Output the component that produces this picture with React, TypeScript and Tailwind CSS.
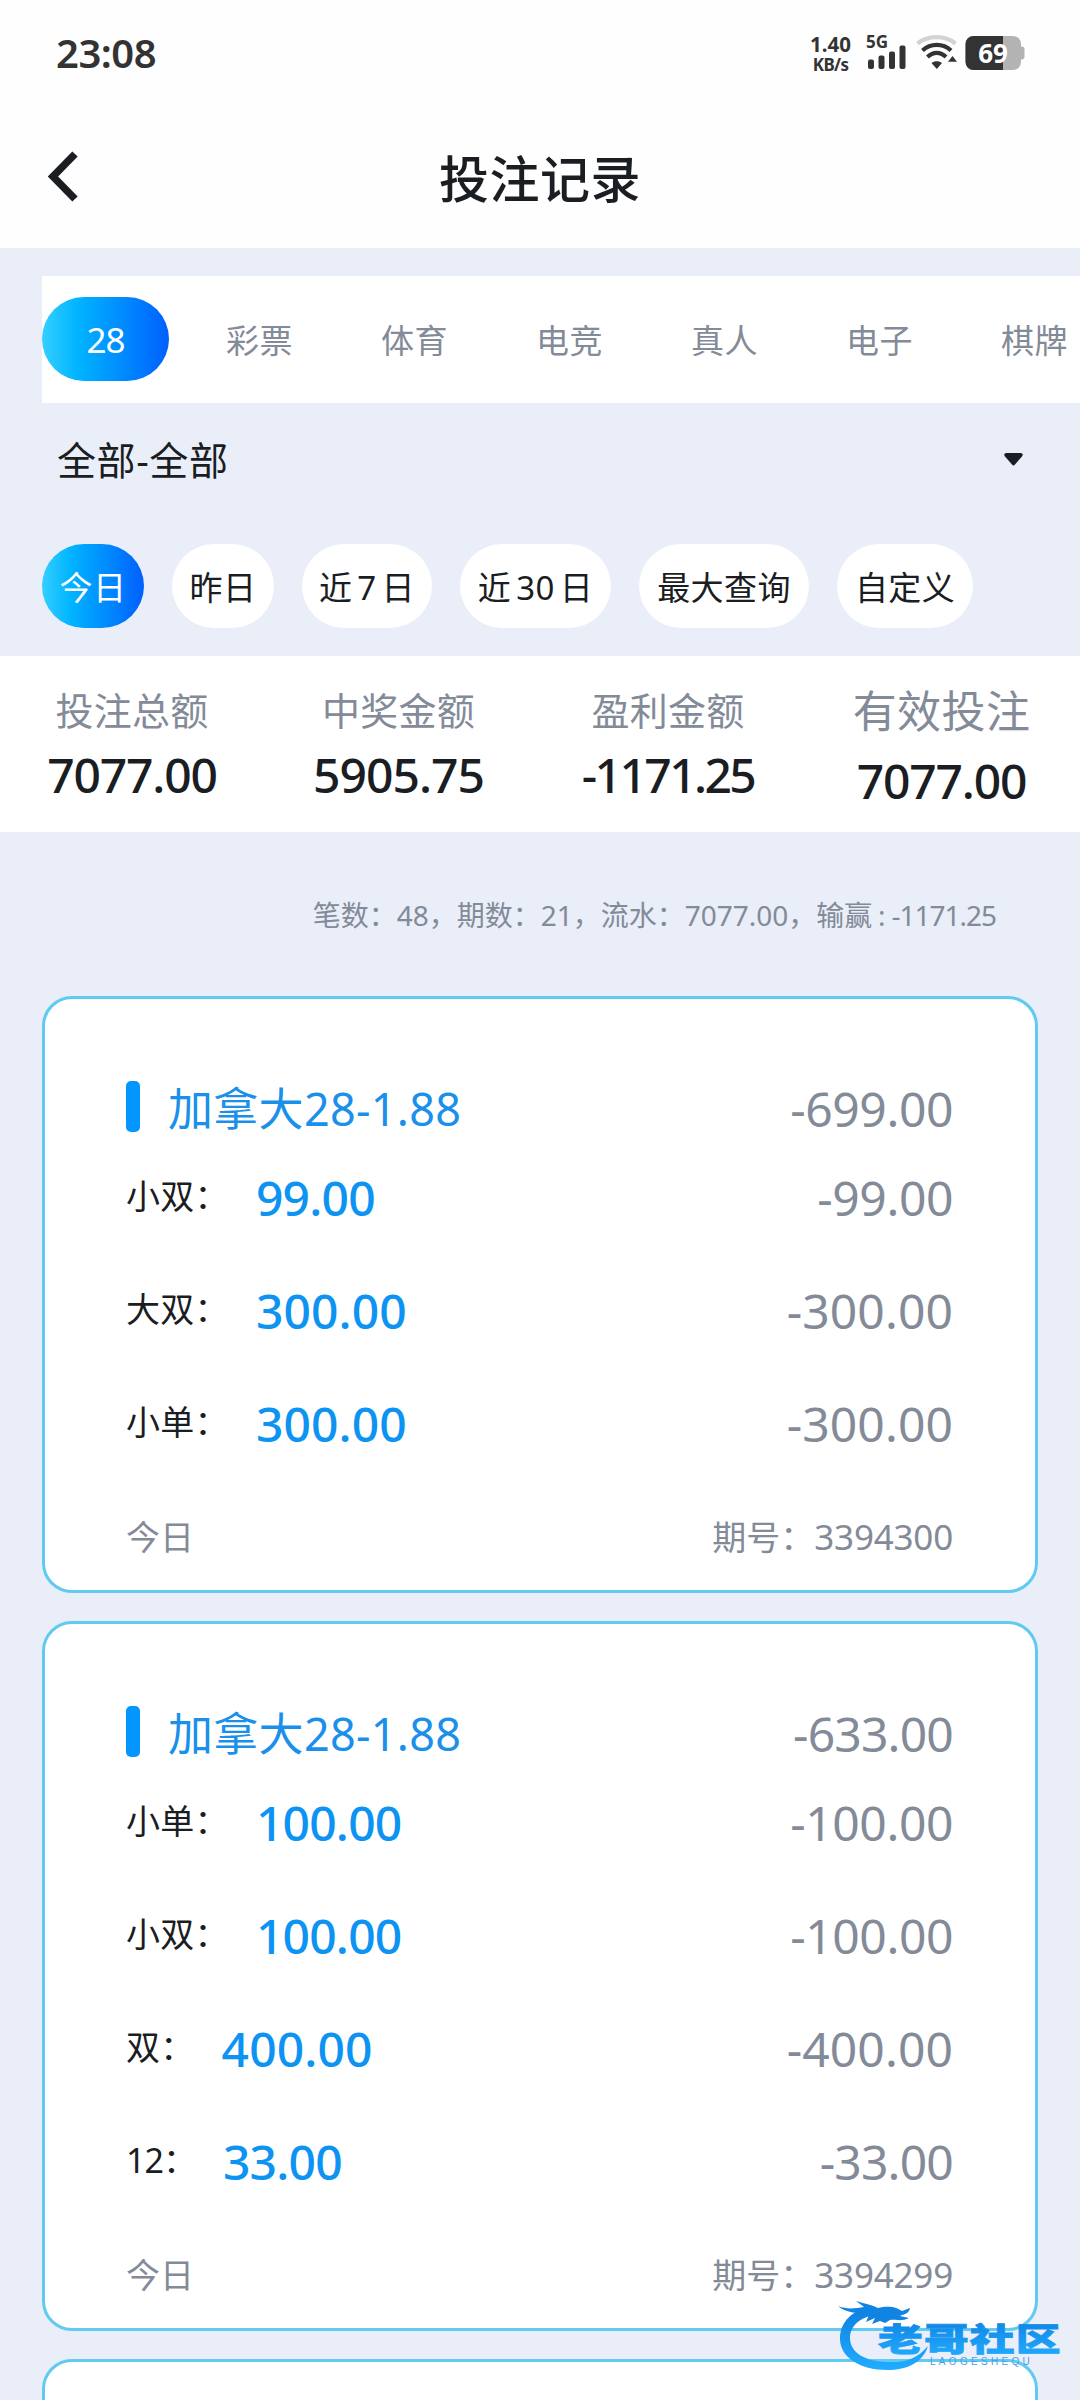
import React from "react";

type Bet = { label: string; stake: string; result: string; tight?: boolean };
type BetRecord = { total: string; issue: string; bets: Bet[] };

const tabs = ["彩票", "体育", "电竞", "真人", "电子", "棋牌"];

const ranges = [
  { label: "今日", width: "w-[102px]", active: true },
  { label: "昨日", width: "w-[102px]" },
  { label: "近 7 日", width: "w-[130px]" },
  { label: "近 30 日", width: "w-[151px]" },
  { label: "最大查询", width: "w-[170px]" },
  { label: "自定义", width: "w-[136px]" },
];

const records: BetRecord[] = [
  {
    total: "-699.00",
    issue: "3394300",
    bets: [
      { label: "小双：", stake: "99.00", result: "-99.00" },
      { label: "大双：", stake: "300.00", result: "-300.00" },
      { label: "小单：", stake: "300.00", result: "-300.00" },
    ],
  },
  {
    total: "-633.00",
    issue: "3394299",
    bets: [
      { label: "小单：", stake: "100.00", result: "-100.00" },
      { label: "小双：", stake: "100.00", result: "-100.00" },
      { label: "双：", stake: "400.00", result: "-400.00" },
      { label: "12：", stake: "33.00", result: "-33.00", tight: true },
    ],
  },
];

function amountTracking(text: string) {
  if (text === "99.00") return "tracking-[-0.8px]";
  if (/^100|33\./.test(text)) return "tracking-[-0.8px]";
  if (/^-(100|99|633|699)/.test(text)) return "tracking-[-0.4px]";
  return "tracking-[0.1px]";
}

function StatusBar() {
  return (
    <div className="flex h-[106px] items-start justify-between pr-[56px] pl-[56px] text-[#333333]">
      <div className="mt-[33px] text-[40px] leading-[40px] font-semibold tracking-[-0.5px]">23:08</div>
      <div className="mt-[33px] flex h-[40px] items-start">
        <div className="mr-[15px] flex flex-col items-center font-bold">
          <span className="mt-[1px] text-[20.500px] leading-[20px]">1.40</span>
          <span className="mt-[1px] text-[17px] leading-[20px] tracking-[-0.700px]">KB/s</span>
        </div>
        <svg width="42" height="40" viewBox="0 0 42 40" className="mr-[8px] overflow-visible" fill="#333333">
          <text x="0" y="14.500" fontSize="17" fontWeight="700" fontFamily="Noto Sans">5G</text>
          <rect x="2" y="26.500" width="6" height="9.500" rx="2" />
          <rect x="12.500" y="22.500" width="6" height="13.500" rx="2" />
          <rect x="23" y="18.500" width="6" height="17.500" rx="2" />
          <rect x="33.500" y="12.500" width="6" height="23.500" rx="2" />
        </svg>
        <svg width="42" height="40" viewBox="0 0 42 40" className="mr-[7px]" fill="none" strokeWidth="4.200">
          <path d="M1.500 10.500C12 2 29 2 39.500 10.500" stroke="#d2d2d2" />
          <path d="M6.500 17.500C14.500 10 27 10 35 17.500" stroke="#333333" />
          <path d="M11.500 24C17 18.500 24.500 18.500 30 24" stroke="#333333" />
          <path d="M15.500 30C18.500 27.600 23 27.600 26 30L20.800 36Z" fill="#333333" />
          <path d="M32 28.800L36.500 23L41 28.800Z" fill="#333333" />
        </svg>
        <svg width="59" height="40" viewBox="0 0 59 40" className="overflow-visible">
          <path d="M54 13.500h2.500q3 0 3 3v7q0 3-3 3h-2.500z" fill="#b3b3b3" />
          <rect x="0.500" y="3" width="55.500" height="34" rx="8" fill="#b3b3b3" />
          <path d="M8.500 3H38V37H8.500a8 8 0 0 1-8-8V11a8 8 0 0 1 8-8z" fill="#333333" />
          <text x="28" y="29.500" textAnchor="middle" fontSize="26" fontWeight="700" fontFamily="Noto Sans" fill="#ffffff">69</text>
        </svg>
      </div>
    </div>
  );
}

function TitleBar() {
  return (
    <div className="relative flex h-[142px] items-center justify-center pt-[4px] text-[#1a1d21]">
      <svg className="absolute top-[43px] left-[44px]" width="38" height="56" viewBox="0 0 38 56" fill="none">
        <path d="M31 5L9 27.500L31 50" stroke="#1a1d21" strokeWidth="7.500" />
      </svg>
      <h1 className="text-[50px] leading-[60px] font-medium tracking-[0.5px]">投注记录</h1>
    </div>
  );
}

function Stat({ label, value, width, tracking }: { label: string; value: string; width: string; tracking: string }) {
  return (
    <div className={"flex flex-col items-center pt-[29px] " + width}>
      <span className="text-[38px] leading-[50px] tracking-[0.3px] text-[#838a98]">{label}</span>
      <span className={"mt-[15px] text-[48px] leading-[50px] font-medium text-[#1a1d21] " + tracking}>{value}</span>
    </div>
  );
}

function Card({ record }: { record: BetRecord }) {
  return (
    <section className="mb-[28px] rounded-[30px] border-[3px] border-[#60caf1] bg-white pt-[77px] pr-[82px] pl-[81px]">
      <div className="flex h-[65px] items-center justify-between">
        <div className="flex items-center">
          <span className="mt-[-4px] h-[51px] w-[14px] rounded-[5px] bg-[#0396ff]" />
          <span className="ml-[28px] text-[45px] leading-[60px] tracking-[0.3px] text-[#1a90ea]">加拿大28-1.88</span>
        </div>
        <span className={"text-[48px] leading-[60px] text-[#838a98] " + amountTracking(record.total)}>{record.total}</span>
      </div>
      {record.bets.map((b) => (
        <div key={b.label} className="flex h-[113px] items-center justify-between">
          <div className="flex items-center">
            <span
              className={
                "mt-[-4px] text-[34px] leading-[50px] text-[#1a1d21] " + (b.tight ? "tracking-[-1px]" : "tracking-[0.3px]")
              }
            >
              {b.label}
            </span>
            <span className={"ml-[27px] text-[48px] leading-[60px] font-medium text-[#0d93f2] " + amountTracking(b.stake)}>
              {b.stake}
            </span>
          </div>
          <span className={"text-[48px] leading-[60px] text-[#838a98] " + amountTracking(b.result)}>{b.result}</span>
        </div>
      ))}
      <div className="flex h-[110px] items-center justify-between pt-[5px] text-[34px] text-[#838a98]">
        <span>今日</span>
        <span>
          期号：<span className="text-[35px] tracking-[-0.2px]">{record.issue}</span>
        </span>
      </div>
    </section>
  );
}

function Watermark() {
  return (
    <svg className="absolute top-[2296px] left-[832px]" width="240" height="84" viewBox="0 0 240 84">
      <defs>
        <linearGradient id="mark" x1="0" y1="0" x2="0" y2="1">
          <stop offset="0" stopColor="#0d7fe0" />
          <stop offset="1" stopColor="#22adff" />
        </linearGradient>
      </defs>
      <path
        d="M42 11C20 13 8 26 8 43C8 61 28 74 55 74C76 74 91 66 96 50C86 62 73 67 57 66C34 66 18 57 18 42C18 30 28 21 44 19Z"
        fill="url(#mark)"
      />
      <path
        d="M6 10C16 14 24 12 32 11L24 5C34 8 40 9 46 12C58 9 66 12 70 15L78 12C77 18 72 18 68 20L77 22C70 26 62 23 58 24L53 27L48 25L40 28L43 22L34 26L37 19C27 16 14 18 6 10Z"
        fill="#1183e2"
      />
      <g fontFamily="'Noto Sans CJK SC', sans-serif" fontWeight="900" fill="url(#mark)" stroke="url(#mark)" strokeWidth="0.800">
        <text transform="translate(46 54.500) scale(1.4 1)" fontSize="32" letterSpacing="0.800">老哥社区</text>
      </g>
      <text x="98" y="68.500" fontSize="10" letterSpacing="3.300" fontWeight="400" fontFamily="Liberation Sans" fill="#4a9fe4">
        LAOGESHEQU
      </text>
    </svg>
  );
}

export default function App() {
  return (
    <div className="relative h-[2400px] w-[1080px] overflow-hidden bg-[#eaeef9] font-['Noto_Sans','Noto_Sans_CJK_SC',sans-serif]">
      <header className="h-[248px] bg-[#fefefe]">
        <StatusBar />
        <TitleBar />
      </header>

      <nav className="mt-[28px] ml-[42px] flex h-[127px] items-center bg-white pb-[1px] text-[33px] tracking-[0.5px] text-[#838a98]">
        <span className="mr-[13px] flex h-[84px] w-[127px] shrink-0 items-center justify-center rounded-[42px] bg-[linear-gradient(90deg,#35cfff_0%,#00b4ff_28%,#0060ff_100%)] pt-[3px] text-[35px] tracking-[-1px] text-white">
          28
        </span>
        {tabs.map((t) => (
          <span key={t} className="flex w-[155px] shrink-0 justify-center pt-[4px]">{t}</span>
        ))}
      </nav>

      <div className="flex h-[141px] items-center justify-between pr-[57px] pb-[27px] pl-[57px] text-[39px] tracking-[0.6px] text-[#1a1d21]">
        <span>全部-全部</span>
        <svg width="19" height="13" viewBox="0 0 19 13" className="mt-[-1px]">
          <path d="M2 0H17Q20 1 18 3.500L11 11.500Q9.500 13.500 8 11.500L1 3.500Q-1 1 2 0Z" fill="#1a1d21" />
        </svg>
      </div>

      <div className="flex gap-[28px] pl-[42px]">
        {ranges.map((r) => (
          <span
            key={r.label}
            className={
              "flex h-[84px] items-center justify-center rounded-[42px] pt-[3px] text-[33px] tracking-[0.4px] whitespace-nowrap [word-spacing:-4px] " +
              r.width +
              (r.active
                ? " bg-[linear-gradient(90deg,#35cfff_0%,#00b4ff_28%,#0060ff_100%)] text-white"
                : " bg-white text-[#1a1d21]")
            }
          >
            {r.label}
          </span>
        ))}
      </div>

      <div className="mt-[28px] flex h-[176px] bg-white">
        <Stat label="投注总额" value="7077.00" width="w-[264px]" tracking="tracking-[-1.2px]" />
        <Stat label="中奖金额" value="5905.75" width="w-[269px]" tracking="tracking-[-1px]" />
        <Stat label="盈利金额" value="-1171.25" width="w-[270px]" tracking="tracking-[-2.6px]" />
        <div className="flex w-[277px] flex-col items-center pt-[25px]">
          <span className="text-[44px] leading-[60px] tracking-[0.4px] text-[#838a98]">有效投注</span>
          <span className="mt-[15px] text-[48px] leading-[50px] font-medium tracking-[-1.2px] text-[#1a1d21]">7077.00</span>
        </div>
      </div>

      <div className="flex h-[164px] items-center justify-end pt-[2px] pr-[84px] text-[28px] text-[#838a98]">
        <span>笔数：48，期数：21，流水：7077.00，输赢</span>
        <span className="w-[19px] text-center">:</span>
        <span className="tracking-[-1px]">-1171.25</span>
      </div>

      <main className="flex flex-col px-[42px]">
        {records.map((r) => (
          <Card key={r.issue} record={r} />
        ))}
        <section className="h-[120px] rounded-[30px] border-[3px] border-[#60caf1] bg-white" />
      </main>

      <Watermark />
    </div>
  );
}
